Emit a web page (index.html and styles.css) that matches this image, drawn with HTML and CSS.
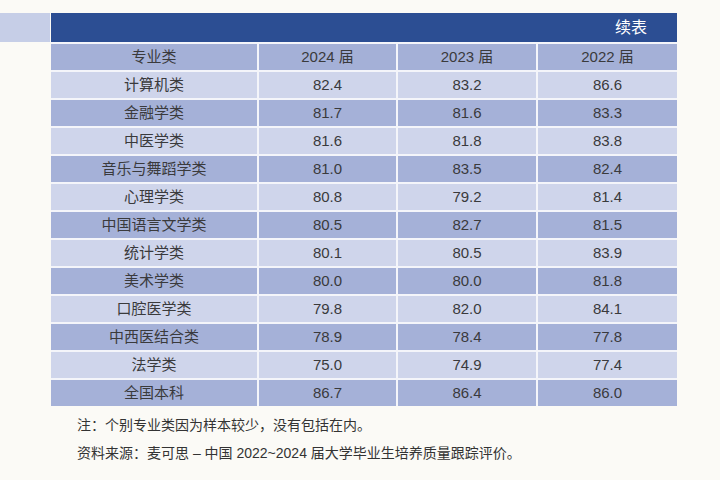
FILE: index.html
```html
<!DOCTYPE html>
<html lang="zh">
<head>
<meta charset="utf-8">
<link rel="stylesheet" href="styles.css">
</head>
<body>
<div class="page">
  <div class="topbar">
    <div class="strip"></div>
    <div class="title">续表</div>
  </div>
  <table class="data">
    <colgroup><col class="c1"><col class="c2"><col class="c3"><col class="c4"></colgroup>
    <thead>
      <tr><th>专业类</th><th>2024 届</th><th>2023 届</th><th>2022 届</th></tr>
    </thead>
    <tbody>
      <tr><td>计算机类</td><td>82.4</td><td>83.2</td><td>86.6</td></tr>
      <tr><td>金融学类</td><td>81.7</td><td>81.6</td><td>83.3</td></tr>
      <tr><td>中医学类</td><td>81.6</td><td>81.8</td><td>83.8</td></tr>
      <tr><td>音乐与舞蹈学类</td><td>81.0</td><td>83.5</td><td>82.4</td></tr>
      <tr><td>心理学类</td><td>80.8</td><td>79.2</td><td>81.4</td></tr>
      <tr><td>中国语言文学类</td><td>80.5</td><td>82.7</td><td>81.5</td></tr>
      <tr><td>统计学类</td><td>80.1</td><td>80.5</td><td>83.9</td></tr>
      <tr><td>美术学类</td><td>80.0</td><td>80.0</td><td>81.8</td></tr>
      <tr><td>口腔医学类</td><td>79.8</td><td>82.0</td><td>84.1</td></tr>
      <tr><td>中西医结合类</td><td>78.9</td><td>78.4</td><td>77.8</td></tr>
      <tr><td>法学类</td><td>75.0</td><td>74.9</td><td>77.4</td></tr>
      <tr><td>全国本科</td><td>86.7</td><td>86.4</td><td>86.0</td></tr>
    </tbody>
  </table>
  <div class="notes">
    <p>注：个别专业类因为样本较少，没有包括在内。</p>
    <p>资料来源：麦可思 – 中国 2022~2024 届大学毕业生培养质量跟踪评价。</p>
  </div>
</div>
</body>
</html>
```
FILE: styles.css
```css
html, body {
  margin: 0;
  padding: 0;
  background: #fbfaf6;
}
body {
  width: 720px;
  height: 480px;
  overflow: hidden;
  font-family: "Liberation Sans", "Noto Sans CJK SC", sans-serif;
  color: #3a3a3c;
}
.page {
  padding-top: 13px;
}
.topbar {
  display: flex;
  gap: 1px;
  height: 29px;
}
.strip {
  width: 50px;
  background: #c6cee7;
}
.title {
  width: 626px;
  background: #2c4e93;
  color: #ffffff;
  font-size: 16px;
  line-height: 29px;
  text-align: right;
  padding-right: 30px;
  box-sizing: border-box;
}
.data {
  margin-left: 51px;
  width: 626px;
  border-collapse: collapse;
  table-layout: fixed;
}
.c1 { width: 207px; }
.c2 { width: 139px; }
.c3 { width: 140px; }
.c4 { width: 140px; }
.data th, .data td {
  height: 26px;
  padding: 0;
  text-align: center;
  font-weight: normal;
  font-size: 15px;
  border: 2px solid #f4f5fa;
  line-height: 26px;
}
.data tr > :first-child { border-left: none; }
.data tr > :last-child { border-right: none; }
.data tbody tr:last-child td { border-bottom: none; }
.data thead th { background: #a4b0d7; }
.data tbody tr:nth-child(odd) td { background: #cfd5eb; }
.data tbody tr:nth-child(even) td { background: #a5b1d8; }
.notes {
  padding-left: 77px;
  padding-top: 5px;
  font-size: 14px;
  color: #333;
}
.notes p {
  margin: 0;
  line-height: 28px;
}
```
